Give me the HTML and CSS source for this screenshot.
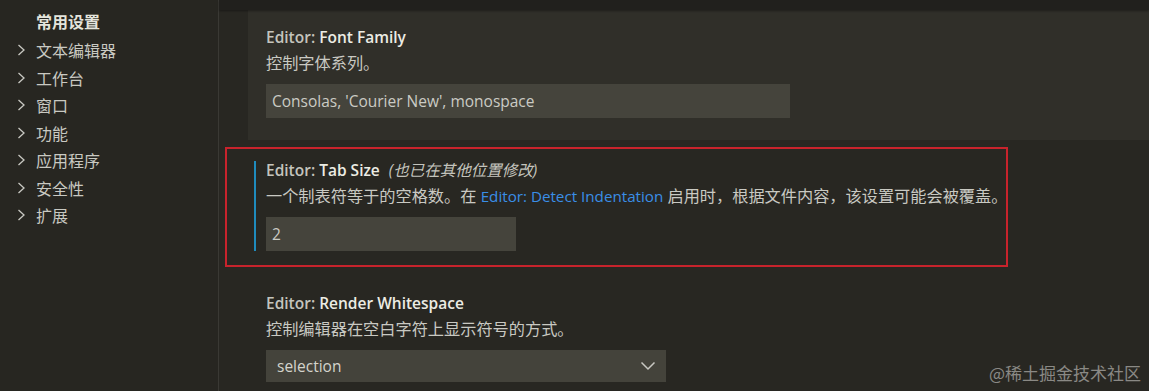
FILE: index.html
```html
<!DOCTYPE html>
<html lang="zh-CN">
<head>
<meta charset="utf-8">
<title>Settings</title>
<link rel="stylesheet" href="styles.css">
</head>
<body>
<div class="app">
  <nav class="sidebar">
    <div class="nav-head">常用设置</div>
    <div class="nav-item"><svg class="chev" viewBox="0 0 9 12" width="9" height="12"><polyline points="1.5,1 7,6 1.5,11"/></svg><span>文本编辑器</span></div>
    <div class="nav-item"><svg class="chev" viewBox="0 0 9 12" width="9" height="12"><polyline points="1.5,1 7,6 1.5,11"/></svg><span>工作台</span></div>
    <div class="nav-item"><svg class="chev" viewBox="0 0 9 12" width="9" height="12"><polyline points="1.5,1 7,6 1.5,11"/></svg><span>窗口</span></div>
    <div class="nav-item"><svg class="chev" viewBox="0 0 9 12" width="9" height="12"><polyline points="1.5,1 7,6 1.5,11"/></svg><span>功能</span></div>
    <div class="nav-item"><svg class="chev" viewBox="0 0 9 12" width="9" height="12"><polyline points="1.5,1 7,6 1.5,11"/></svg><span>应用程序</span></div>
    <div class="nav-item"><svg class="chev" viewBox="0 0 9 12" width="9" height="12"><polyline points="1.5,1 7,6 1.5,11"/></svg><span>安全性</span></div>
    <div class="nav-item"><svg class="chev" viewBox="0 0 9 12" width="9" height="12"><polyline points="1.5,1 7,6 1.5,11"/></svg><span>扩展</span></div>
  </nav>
  <main class="main">
    <div class="topbar"></div>
    <div class="list">
      <section class="setting hovered">
        <div class="body">
          <div class="title"><span class="cat">Editor: </span><span class="name">Font Family</span></div>
          <div class="desc">控制字体系列。</div>
          <div class="input w-font">Consolas, 'Courier New', monospace</div>
        </div>
      </section>
      <section class="setting">
        <div class="body modified">
          <div class="title"><span class="cat">Editor: </span><span class="name">Tab Size</span><span class="note">(也已在其他位置修改)</span></div>
          <div class="desc">一个制表符等于的空格数。在 <span class="link">Editor: Detect Indentation</span> 启用时，根据文件内容，该设置可能会被覆盖。</div>
          <div class="input w-tab">2</div>
        </div>
      </section>
      <section class="setting">
        <div class="body">
          <div class="title"><span class="cat">Editor: </span><span class="name">Render Whitespace</span></div>
          <div class="desc">控制编辑器在空白字符上显示符号的方式。</div>
          <div class="select w-sel"><span>selection</span><svg class="down" viewBox="0 0 16 10" width="16" height="10"><polyline points="1.5,1.5 8,8 14.5,1.5"/></svg></div>
        </div>
      </section>
    </div>
    <div class="annot"></div>
    <div class="watermark">@稀土掘金技术社区</div>
  </main>
</div>
</body>
</html>
```
FILE: styles.css
```css
* { box-sizing: border-box; }
html, body { margin: 0; padding: 0; }
body {
  background: #272621;
  font-family: "Open Sans", "Noto Sans CJK SC", sans-serif;
  color: #c9c9c2;
  overflow: hidden;
}
.app {
  display: flex;
  width: 1149px;
  height: 391px;
}
.sidebar {
  width: 219px;
  flex: none;
  background: #272621;
  border-right: 1px solid #3a3934;
  padding-top: 9px;
  font-size: 16px;
}
.nav-head {
  height: 27.5px;
  line-height: 27.5px;
  padding-left: 36px;
  font-weight: 700;
  color: #e4e4dc;
}
.nav-item {
  height: 27.5px;
  display: flex;
  align-items: center;
  padding-left: 17px;
  gap: 10px;
  color: #c9c9c2;
}
.chev { flex: none; }
.chev polyline, .down polyline {
  fill: none;
  stroke: #c8c8c2;
  stroke-width: 1.3;
}
.down polyline { stroke-width: 1.5; }
.main {
  flex: 1;
  position: relative;
  background: #282722;
  font-size: 15.5px;
}
.topbar {
  height: 10px;
  background: #21201d;
  box-shadow: 0 1px 2px rgba(0,0,0,0.35);
  position: relative;
  z-index: 1;
}
.list {
  display: flex;
  flex-direction: column;
  gap: 3px;
  padding-left: 29px;
}
.setting {
  padding: 18px 0 22px 6px;
}
.setting.hovered { background: #302f29; }
.body {
  border-left: 2px solid transparent;
  padding-left: 10px;
}
.body.modified { border-left-color: #1f8bbd; }
.title {
  height: 18px;
  line-height: 18px;
  white-space: nowrap;
}
.cat { color: #c4c4bd; font-weight: 600; }
.name { color: #ecece4; font-weight: 600; }
.note {
  font-style: italic;
  color: #c4c4bd;
  margin-left: 9px;
}
.desc {
  margin-top: 6px;
  height: 22px;
  line-height: 22px;
  font-size: 16.2px;
  white-space: nowrap;
  color: #c9c9c2;
}
.link { color: #3a8ee6; font-size: 15.2px; }
.input, .select {
  margin-top: 10px;
  height: 34px;
  background: #45443c;
  color: #cbcbc4;
  display: flex;
  align-items: center;
  padding-left: 6px;
  white-space: nowrap;
}
.select {
  height: 32px;
  padding-left: 11px;
  padding-right: 10px;
  justify-content: space-between;
  background: #44433b;
  color: #d4d4cc;
}
.w-font { width: 524px; }
.w-tab { width: 250px; }
.w-sel { width: 400px; }
.annot {
  position: absolute;
  left: 6px;
  top: 147px;
  width: 783px;
  height: 120px;
  border: 2px solid #c8232c;
  pointer-events: none;
}
.watermark {
  position: absolute;
  right: 8px;
  bottom: 8px;
  font-size: 17px;
  line-height: 20px;
  color: #8a8985;
  font-family: "Noto Sans CJK SC", sans-serif;
}
```
